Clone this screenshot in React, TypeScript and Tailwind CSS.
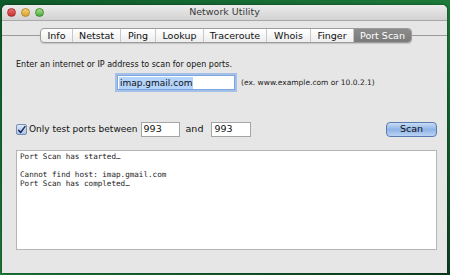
import React from "react";

const tabs = [
  { label: "Info", w: 33 },
  { label: "Netstat", w: 48 },
  { label: "Ping", w: 35 },
  { label: "Lookup", w: 48 },
  { label: "Traceroute", w: 63 },
  { label: "Whois", w: 44 },
  { label: "Finger", w: 43 },
  { label: "Port Scan", w: 58, active: true },
];

export default function App() {
  const font = { fontFamily: '"DejaVu Sans", "Liberation Sans", sans-serif' };
  return (
    <div
      className="w-[450px] h-[275px] overflow-hidden bg-gradient-to-br from-[#0f5a2a] via-[#1d7a3a] to-[#0a3f1d] pt-[5px] pl-[2px]"
      style={font}
    >
      <div className="w-[445px] h-[268px] rounded-t-[5px] overflow-hidden flex flex-col bg-[#e6e6e6] shadow-[0_0_3px_rgba(0,0,0,0.5)]">
        {/* title bar */}
        <div className="relative h-[16px] flex items-center bg-gradient-to-b from-[#ececec] to-[#d2d2d2] border-b border-[#a8a8a8]">
          <div className="flex items-center gap-[5px] pl-[5px]">
            <span className="w-[9px] h-[9px] rounded-full bg-gradient-to-b from-[#e87070] to-[#c8282a] border border-[#a33]" />
            <span className="w-[9px] h-[9px] rounded-full bg-gradient-to-b from-[#f5d070] to-[#d9a227] border border-[#b8862a]" />
            <span className="w-[9px] h-[9px] rounded-full bg-gradient-to-b from-[#a7e08a] to-[#4caa3a] border border-[#3d8a30]" />
          </div>
          <div className="absolute inset-0 flex items-center justify-center text-[9.5px] text-[#3a3a3a]">
            Network Utility
          </div>
        </div>

        {/* tabs */}
        <div className="flex items-center mt-[7px]">
          <div className="w-[38px] h-px bg-[#9a9a9a]" />
          <div className="flex h-[15px] rounded-[4px] border border-[#9c9c9c] bg-gradient-to-b from-[#ffffff] to-[#ededed] shadow-[0_1px_1px_rgba(0,0,0,0.15)] overflow-hidden">
            {tabs.map((t, i) => (
              <div
                key={t.label}
                style={{ width: t.w - (i === 0 ? 1 : 0) - (i === tabs.length - 1 ? 1 : 0) }}
                className={
                  "flex items-center justify-center text-[9.5px] leading-none " +
                  (t.active
                    ? "bg-gradient-to-b from-[#8c8c8c] to-[#7a7a7a] text-white"
                    : "text-[#111] border-r border-[#c8c8c8]")
                }
              >
                {t.label}
              </div>
            ))}
          </div>
          <div className="flex-1 h-px bg-[#9a9a9a]" />
        </div>

        {/* content */}
        <div className="flex flex-col pl-[14px] pr-[10px]">
          <div className="mt-[16px] text-[8px] text-[#111] leading-[12px]">
            Enter an internet or IP address to scan for open ports.
          </div>
          <div className="flex items-center mt-[4px] pl-[101px]">
            <div className="w-[118px] h-[15px] bg-white border border-[#7aa7e0] shadow-[0_0_0_2px_rgba(110,160,230,0.55)] flex items-center pl-[1px]">
              <span className="bg-[#b3d3fb] text-[9px] leading-[12px] text-[#111] px-[1px]">imap.gmail.com</span>
            </div>
            <span className="ml-[6px] text-[7.5px] text-[#222]">(ex. www.example.com or 10.0.2.1)</span>
          </div>

          <div className="flex items-center mt-[32px] h-[15px]">
            <div className="w-[11px] h-[11px] rounded-[2px] border border-[#7b8fb0] bg-gradient-to-b from-[#dbe8f8] to-[#a9c4e8] flex items-center justify-center">
              <svg width="10" height="10" viewBox="0 0 10 10">
                <path d="M1.8 5.2 L4 7.8 L8.8 1.2" fill="none" stroke="#1a2a55" strokeWidth="1.6" strokeLinecap="round" strokeLinejoin="round" />
              </svg>
            </div>
            <span className="ml-[2px] text-[9px] text-[#111]">Only test ports between</span>
            <div className="ml-[3px] w-[39px] h-[15px] bg-white border border-[#a5a5a5] flex items-center pl-[2px] text-[9.5px] text-[#111]">993</div>
            <span className="ml-[6px] text-[9.5px] text-[#111]">and</span>
            <div className="ml-[8px] w-[40px] h-[15px] bg-white border border-[#a5a5a5] flex items-center pl-[2px] text-[9.5px] text-[#111]">993</div>
            <div className="flex-1" />
            <div className="w-[51px] h-[15px] rounded-[4px] border border-[#5a7cb0] bg-gradient-to-b from-[#c9dcf5] via-[#8fb4e6] to-[#b9d3f4] flex items-center justify-center text-[9.5px] text-[#111]">
              Scan
            </div>
          </div>

          <div
            className="mt-[13px] h-[100px] bg-white border border-[#b5b5b5] px-[3px] pt-[1px] text-[7.6px] leading-[9px] text-[#222]"
            style={{ fontFamily: '"DejaVu Sans Mono", "Liberation Mono", monospace' }}
          >
            <div>Port Scan has started…</div>
            <div>&nbsp;</div>
            <div>Cannot find host: imap.gmail.com</div>
            <div>Port Scan has completed…</div>
          </div>
        </div>
      </div>
    </div>
  );
}
